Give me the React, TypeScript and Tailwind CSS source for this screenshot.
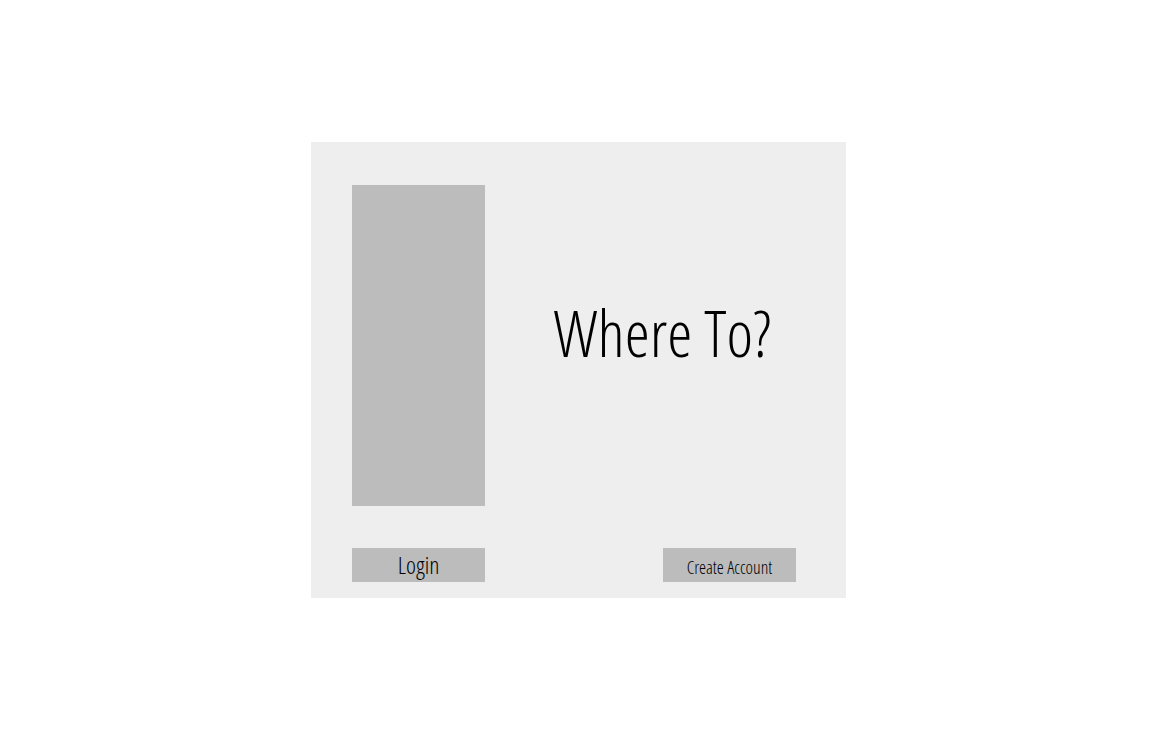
export default function App() {
  return (
    <main className="flex min-h-screen items-center justify-center bg-white pr-px font-['Open_Sans_Condensed_Light','Open_Sans_Condensed','Open_Sans',sans-serif] font-light text-black">
      <section className="grid w-full max-w-[535px] grid-cols-[133px_1fr] gap-y-[42px] bg-[#eeeeee] pt-[43px] pr-[50px] pb-4 pl-[41px]">
        <div className="min-h-[321px] bg-[#bcbcbc]" />
        <h1 className="self-center pb-6 pl-11 text-center text-[64px] leading-[88px] whitespace-nowrap [font-kerning:none]">Where To?</h1>
        <button type="button" className="h-[34px] bg-[#bcbcbc] text-2xl">Login</button>
        <button type="button" className="h-[34px] w-[133px] justify-self-end bg-[#bcbcbc] pt-1 text-lg whitespace-nowrap">Create Account</button>
      </section>
    </main>
  );
}
